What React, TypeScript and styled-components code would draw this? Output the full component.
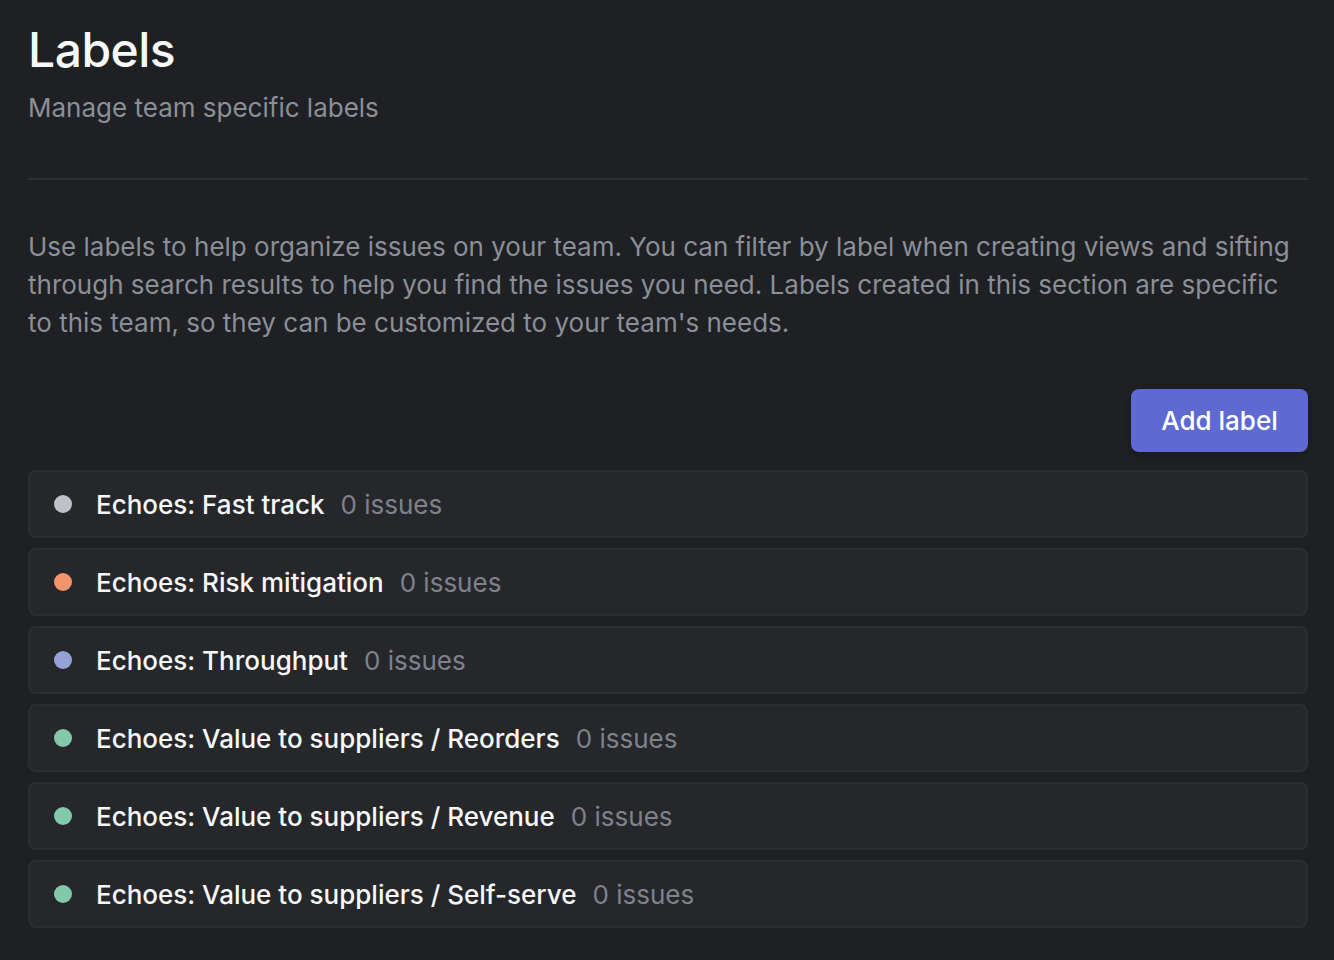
import React from "react";
import styled, { createGlobalStyle } from "styled-components";

const Global = createGlobalStyle`
  html, body { margin: 0; padding: 0; background: #1f2023; }
  body { font-family: Inter, "Noto Sans", sans-serif; -webkit-font-smoothing: antialiased; }
  * { box-sizing: border-box; }
`;

const Page = styled.div`
  padding: 20px 26px 40px 28px;
  color: #f7f8f8;
  min-height: 960px;
`;

const Header = styled.header`
  display: flex;
  flex-direction: column;
  padding-bottom: 54px;
  border-bottom: 2px solid #2e3035;
`;

const Title = styled.h1`
  margin: 0;
  font-size: 48px;
  font-weight: 500;
  line-height: 60px;
  color: #f7f8f8;
  letter-spacing: -0.5px;
`;

const Subtitle = styled.p`
  margin: 12px 0 0;
  font-size: 26px;
  line-height: 32px;
  color: #8a8f98;
`;

const Description = styled.p`
  margin: 48px 0 0;
  font-size: 26px;
  line-height: 38px;
  color: #8a8f98;
`;

const Actions = styled.div`
  display: flex;
  justify-content: flex-end;
  margin-top: 47px;
  margin-bottom: 18px;
`;

const Button = styled.button`
  height: 63px;
  width: 177px;
  border: none;
  border-radius: 8px;
  background: #5e6ad2;
  color: #ffffff;
  font-family: inherit;
  font-size: 26px;
  font-weight: 500;
  box-shadow: 0 2px 6px rgba(0, 0, 0, 0.25);
`;

const List = styled.div`
  display: flex;
  flex-direction: column;
  gap: 10px;
`;

const Row = styled.div`
  display: flex;
  align-items: center;
  height: 68px;
  padding: 0 24px 0 24px;
  background: #26272b;
  border: 2px solid #2c2d31;
  border-radius: 8px;
`;

const Dot = styled.span<{ $color: string }>`
  width: 18px;
  height: 18px;
  border-radius: 50%;
  background: ${(p) => p.$color};
  flex-shrink: 0;
  margin-right: 24px;
`;

const Name = styled.span`
  font-size: 26px;
  font-weight: 500;
  color: #f7f8f8;
`;

const Count = styled.span`
  font-size: 26px;
  color: #7e828b;
  margin-left: 16px;
`;

const labels = [
  { name: "Echoes: Fast track", color: "#bec2c8" },
  { name: "Echoes: Risk mitigation", color: "#f2946c" },
  { name: "Echoes: Throughput", color: "#95a2d6" },
  { name: "Echoes: Value to suppliers / Reorders", color: "#82c8aa" },
  { name: "Echoes: Value to suppliers / Revenue", color: "#82c8aa" },
  { name: "Echoes: Value to suppliers / Self-serve", color: "#82c8aa" },
];

export default function App() {
  return (
    <>
      <Global />
      <Page>
        <Header>
          <Title>Labels</Title>
          <Subtitle>Manage team specific labels</Subtitle>
        </Header>
        <Description>
          Use labels to help organize issues on your team. You can filter by label when creating views and sifting
          through search results to help you find the issues you need. Labels created in this section are specific
          to this team, so they can be customized to your team's needs.
        </Description>
        <Actions>
          <Button>Add label</Button>
        </Actions>
        <List>
          {labels.map((l) => (
            <Row key={l.name}>
              <Dot $color={l.color} />
              <Name>{l.name}</Name>
              <Count>0 issues</Count>
            </Row>
          ))}
        </List>
      </Page>
    </>
  );
}
